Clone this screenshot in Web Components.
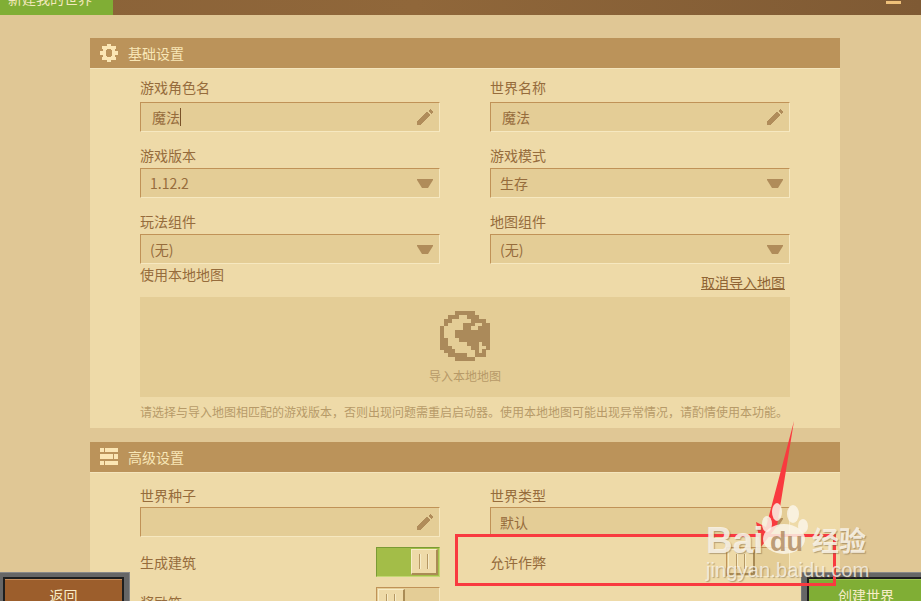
<!DOCTYPE html>
<html lang="zh">
<head>
<meta charset="utf-8">
<title>新建我的世界</title>
<style>
  html, body { margin: 0; height: 100%; overflow: hidden; }
  body { font-family: "Noto Sans CJK SC", sans-serif; font-size: 14px; color: #966c3c; background: #e0c795; }
</style>
</head>
<body>
<game-window>
  <top-bar slot="top" title="新建我的世界"></top-bar>

  <setting-panel title="基础设置">
    <pixel-icon slot="icon" name="gear"></pixel-icon>
    <form-grid>
      <form-field label="游戏角色名" gap="4"><field-box kind="input" value="魔法" caret></field-box></form-field>
      <form-field label="世界名称" gap="4"><field-box kind="input" value="魔法"></field-box></form-field>
      <form-field label="游戏版本"><field-box kind="select" value="1.12.2"></field-box></form-field>
      <form-field label="游戏模式"><field-box kind="select" value="生存"></field-box></form-field>
      <form-field label="玩法组件"><field-box kind="select" value="(无)"></field-box></form-field>
      <form-field label="地图组件"><field-box kind="select" value="(无)"></field-box></form-field>
    </form-grid>
    <import-box></import-box>
  </setting-panel>

  <setting-panel title="高级设置">
    <pixel-icon slot="icon" name="list"></pixel-icon>
    <form-grid style="padding-top: 4px">
      <form-field label="世界种子" gap="1"><field-box kind="input"></field-box></form-field>
      <form-field label="世界类型" gap="1"><field-box kind="select" value="默认"></field-box></form-field>
      <toggle-row label="生成建筑" on></toggle-row>
      <toggle-row label="允许作弊"></toggle-row>
      <toggle-row label="奖励箱"></toggle-row>
    </form-grid>
  </setting-panel>

  <frame-button slot="over" side="left" label="返回"></frame-button>
  <frame-button slot="over" side="right" label="创建世界" green></frame-button>
  <photo-marks slot="over"></photo-marks>
</game-window>

<script>
const GLOBE_MAP = [
  '....#####....',
  '..###..###...',
  '.##.....####.',
  '.#....###..##',
  '#.....##..###',
  '#...#########',
  '#...#########',
  '##...########',
  '##.....###.##',
  '###.....##..#',
  '.###.....#.#.',
  '..#####..###.',
  '....#####....',
];

function mapToRects(rows) {
  let out = '';
  rows.forEach((row, y) => {
    [...row].forEach((c, x) => {
      if (c === '#') out += `<rect x="${x}" y="${y}" width="1.02" height="1.02"/>`;
    });
  });
  return out;
}

class GameWindow extends HTMLElement {
  constructor() {
    super();
    this.attachShadow({ mode: 'open' });
    this.shadowRoot.innerHTML = `<style>
        :host { display: block; position: relative; height: 100vh; overflow: hidden; }
        .content { display: flex; flex-direction: column; gap: 14px; padding: 23px 81px 0 90px; }
      </style>
      <slot name="top"></slot>
      <div class="content"><slot></slot></div>
      <slot name="over"></slot>`;
  }
}

class TopBar extends HTMLElement {
  connectedCallback() {
    this.attachShadow({ mode: 'open' });
    this.shadowRoot.innerHTML = `<style>
        :host {
          display: flex;
          height: 15px;
          overflow: hidden;
          background: linear-gradient(90deg, #8a6238, #90673a 45%, #7f5a34);
        }
        .tab {
          display: flex;
          align-items: flex-end;
          box-sizing: border-box;
          width: 113px;
          padding: 0 0 10px 8px;
          background: #80ae35;
          color: #f3e8bd;
          line-height: 14px;
          white-space: nowrap;
        }
        .min {
          width: 15px;
          height: 3px;
          margin: 1px 20px 0 auto;
          background: #eec07a;
        }
      </style>
      <div class="tab">${this.getAttribute('title')}</div>
      <div class="min"></div>`;
  }
}

class SettingPanel extends HTMLElement {
  connectedCallback() {
    this.attachShadow({ mode: 'open' });
    this.shadowRoot.innerHTML = `<style>
        :host { display: block; background: #eedaa8; }
        .head {
          display: flex;
          align-items: center;
          gap: 10px;
          height: 30px;
          padding-left: 10px;
          background: #bb935a;
          border-bottom: 1px solid #f4e5bd;
          color: #f8e6b6;
          line-height: 28px;
        }
        .body { padding: 9px 50px 0; }
      </style>
      <div class="head"><slot name="icon"></slot><span>${this.getAttribute('title')}</span></div>
      <div class="body"><slot></slot></div>`;
  }
}

class PixelIcon extends HTMLElement {
  connectedCallback() {
    this.attachShadow({ mode: 'open' });
    const inner = this.getAttribute('name') === 'list'
      ? `<path d="M0 0h4v4H0zM5 0h13v4H5zM0 6h13v5H0zM14 6h4v5h-4zM0 13h4v4H0zM5 13h13v4H5z"/>`
      : `<path d="M7 0h4v3H7zM7 15h4v3H7zM0 7h3v4H0zM15 7h3v4h-3zM2 2h3v3H2zM13 2h3v3h-3zM2 13h3v3H2zM13 13h3v3h-3z"/>
         <path fill-rule="evenodd" d="M5 2h8v2h2v10h-2v2H5v-2H3V4h2zM7 5v1H6v6h1v1h4v-1h1V6h-1V5z"/>`;
    this.shadowRoot.innerHTML = `<style>
        :host { display: block; width: 18px; height: 18px; color: #fbe6b4; }
        svg { display: block; width: 100%; height: 100%; fill: currentColor; }
      </style>
      <svg viewBox="0 0 18 18" shape-rendering="crispEdges">${inner}</svg>`;
  }
}

class FormGrid extends HTMLElement {
  constructor() {
    super();
    this.attachShadow({ mode: 'open' });
    this.shadowRoot.innerHTML = `<style>
        :host { display: grid; grid-template-columns: 300px 300px; column-gap: 50px; row-gap: 14px; }
      </style>
      <slot></slot>`;
  }
}

class FormField extends HTMLElement {
  connectedCallback() {
    this.attachShadow({ mode: 'open' });
    const gap = +this.getAttribute('gap') || 2;
    this.shadowRoot.innerHTML = `<style>
        :host { display: block; }
        label { display: block; line-height: 20px; margin: -1px 0 ${gap + 1}px; }
      </style>
      <label>${this.getAttribute('label')}</label>
      <slot></slot>`;
  }
}

class FieldBox extends HTMLElement {
  connectedCallback() {
    this.attachShadow({ mode: 'open' });
    const isInput = this.getAttribute('kind') === 'input';
    const value = this.getAttribute('value') || '';
    const pencil = `<svg width="16" height="16" viewBox="0 0 16 16" shape-rendering="crispEdges"><path d="M0 16v-4L10 3l3 3-9 10zM11 2l2-2 3 3-2 2z"/></svg>`;
    const arrow = `<svg width="16" height="9" viewBox="0 0 16 9"><path d="M0 0h16v1l-5 8H5L0 1z"/></svg>`;
    this.shadowRoot.innerHTML = `<style>
        :host {
          display: flex;
          align-items: center;
          justify-content: space-between;
          box-sizing: border-box;
          height: 30px;
          padding: 0 6px 0 ${isInput ? 11 : 9}px;
          background: #e4cd96;
          border: 1px solid #f6e8c0;
          border-top-color: #c09257;
          border-left-color: #c09257;
        }
        .value { display: flex; align-items: center; height: 20px; line-height: 20px; }
        .caret { width: 1px; height: 18px; background: #7a5228; }
        svg { display: block; fill: #b08c5a; }
      </style>
      <span class="value">${value}${this.hasAttribute('caret') ? '<i class="caret"></i>' : ''}</span>
      ${isInput ? pencil : arrow}`;
  }
}

class ToggleRow extends HTMLElement {
  connectedCallback() {
    this.attachShadow({ mode: 'open' });
    const on = this.hasAttribute('on');
    this.shadowRoot.innerHTML = `<style>
        :host {
          display: flex;
          align-items: center;
          justify-content: space-between;
          height: 30px;
          margin-top: -4px;
        }
        .track {
          display: flex;
          justify-content: ${on ? 'flex-end' : 'flex-start'};
          box-sizing: border-box;
          width: 64px;
          height: 30px;
          padding: 1px;
          background: ${on ? '#a3bd48' : '#e4cd96'};
          border: 1px solid ${on ? '#7a9a35' : '#c09257'};
          border-right-color: ${on ? '#c4d873' : '#f6e8c0'};
          border-bottom-color: ${on ? '#c4d873' : '#f6e8c0'};
        }
        .knob {
          display: flex;
          justify-content: center;
          gap: 6px;
          align-items: center;
          box-sizing: border-box;
          width: 27px;
          height: 26px;
          background: #eedaa8;
          border: 1px solid #f7ecc8;
          border-right: 2px solid #a98b55;
          border-bottom: 2px solid #a98b55;
        }
        .knob i { width: 1px; height: 15px; background: #b59763; border-right: 1px solid #f7ecc8; }
      </style>
      <span>${this.getAttribute('label')}</span>
      <div class="track"><div class="knob"><i></i><i></i></div></div>`;
  }
}

class ImportBox extends HTMLElement {
  connectedCallback() {
    this.attachShadow({ mode: 'open' });
    this.shadowRoot.innerHTML = `<style>
        :host { display: block; height: 164px; margin: 0; }
        .row { display: flex; justify-content: space-between; height: 33px; }
        .row span { line-height: 20px; }
        a { align-self: flex-end; margin: 0 5px 7px 0; line-height: 16px; color: #8f6434; text-decoration: underline; }
        .drop {
          display: flex;
          flex-direction: column;
          align-items: center;
          box-sizing: border-box;
          height: 100px;
          padding-top: 14px;
          background: #e4cd96;
          color: #b79a68;
          font-size: 12px;
        }
        .drop svg { display: block; width: 50px; height: 50px; fill: #ab8a5a; }
        .drop span { margin-top: 7px; line-height: 16px; }
        p { margin: 7px 0 0; font-size: 12px; line-height: 16px; color: #b79a68; white-space: nowrap; }
      </style>
      <div class="row"><span>使用本地地图</span><a>取消导入地图</a></div>
      <div class="drop">
        <svg viewBox="0 0 13 13" shape-rendering="crispEdges">${mapToRects(GLOBE_MAP)}</svg>
        <span>导入本地地图</span>
      </div>
      <p>请选择与导入地图相匹配的游戏版本，否则出现问题需重启启动器。使用本地地图可能出现异常情况，请酌情使用本功能。</p>`;
  }
}

class FrameButton extends HTMLElement {
  connectedCallback() {
    this.attachShadow({ mode: 'open' });
    const left = this.getAttribute('side') === 'left';
    const green = this.hasAttribute('green');
    this.shadowRoot.innerHTML = `<style>
        :host {
          display: block;
          position: absolute;
          top: 572px;
          ${left ? 'left: -3px; width: 133px;' : 'right: -10px; width: 130px;'}
          height: 40px;
          box-sizing: border-box;
          padding: 4px 5px;
          background: #666;
          border-top: 1px solid #888;
          border-right: 1px solid #888;
          border-left: 1px solid #777;
        }
        .in {
          box-sizing: border-box;
          height: 100%;
          border: 2px solid #1e1e1e;
        }
        .face {
          box-sizing: border-box;
          height: 100%;
          padding-top: 5px;
          text-align: center;
          line-height: 20px;
          color: #f8edc8;
          background: ${green ? '#80ae35' : '#9c5e2c'};
          border-top: 1px solid ${green ? '#9cc550' : '#c48c5c'};
        }
      </style>
      <div class="in"><div class="face">${this.getAttribute('label')}</div></div>`;
  }
}

class PhotoMarks extends HTMLElement {
  connectedCallback() {
    this.attachShadow({ mode: 'open' });
    this.shadowRoot.innerHTML = `<style>
        :host { display: block; position: absolute; inset: 0; pointer-events: none; }
        .box {
          position: absolute;
          left: 455px;
          top: 534px;
          width: 381px;
          height: 52px;
          box-sizing: border-box;
          border: 3px solid #f93a3f;
        }
        svg { position: absolute; left: 0; top: 0; }
        .mark {
          position: absolute;
          left: 706px;
          top: 503px;
          width: 170px;
          height: 80px;
          color: rgba(250, 244, 232, .9);
          font-family: "Liberation Sans", sans-serif;
          text-shadow: 1px 1px 1px rgba(110, 90, 60, .45);
        }
        .bai { position: absolute; left: 0; top: 18px; font: bold 37px/40px "Liberation Sans", sans-serif; }
        .du { position: absolute; left: 64px; top: 25px; font: bold 27px/28px "Liberation Sans", sans-serif; color: rgba(170, 130, 85, .75); text-shadow: none; }
        .jy { position: absolute; left: 106px; top: 19px; font: 700 27px/36px "Noto Sans CJK SC", sans-serif; }
        .url { position: absolute; left: 0; top: 55px; font-size: 20.3px; line-height: 24px; white-space: nowrap; color: rgba(250, 244, 232, .8); }
      </style>
      <div class="box"></div>
      <svg width="921" height="601"><path d="M794 421 777 526 761 547 756 522 766 527Z" fill="#f93a3f"/></svg>
      <div class="mark">
        <svg width="170" height="60" style="left:0;top:0">
          <g fill="rgba(250,244,232,.85)">
            <ellipse cx="71" cy="9" rx="5" ry="9"/>
            <ellipse cx="87" cy="11" rx="6" ry="9"/>
            <ellipse cx="61" cy="21" rx="5" ry="8"/>
            <ellipse cx="97" cy="23" rx="5" ry="7"/>
            <ellipse cx="78" cy="36" rx="21" ry="15"/>
          </g>
        </svg>
        <span class="bai">Bai</span>
        <span class="du">du</span>
        <span class="jy">经验</span>
        <span class="url">jingyan.baidu.com</span>
      </div>`;
  }
}

customElements.define('game-window', GameWindow);
customElements.define('top-bar', TopBar);
customElements.define('setting-panel', SettingPanel);
customElements.define('pixel-icon', PixelIcon);
customElements.define('form-grid', FormGrid);
customElements.define('form-field', FormField);
customElements.define('field-box', FieldBox);
customElements.define('toggle-row', ToggleRow);
customElements.define('import-box', ImportBox);
customElements.define('frame-button', FrameButton);
customElements.define('photo-marks', PhotoMarks);
</script>
</body>
</html>
